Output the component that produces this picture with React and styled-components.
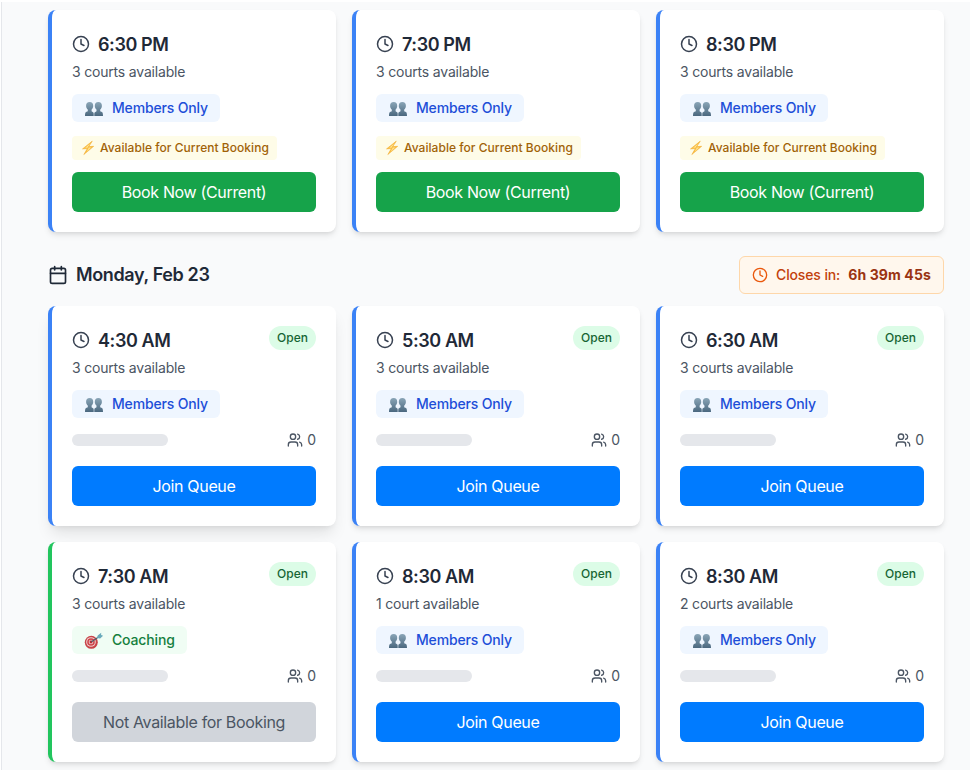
import React from "react";
import styled, { createGlobalStyle, css } from "styled-components";
import { Clock, Calendar, Users } from "lucide-react";

const GlobalStyle = createGlobalStyle`
  *, *::before, *::after { box-sizing: border-box; }
  body {
    margin: 0;
    background: #ffffff;
    font-family: Inter, "Liberation Sans", sans-serif;
    color: #1f2937;
    overflow: hidden;
  }
`;

const Page = styled.main`
  height: 768px;
  margin: 2px 0 0 1px;
  padding: 8px 25px 0 46px;
  border-left: 1px solid #e5e7eb;
  background: #f9fafb;
`;

const Grid = styled.div`
  display: grid;
  grid-template-columns: repeat(3, 288px);
  gap: 16px;
`;

const accents = { members: "#3b82f6", coaching: "#22c55e" };

const Card = styled.article`
  display: flex;
  flex-direction: column;
  align-items: flex-start;
  height: ${(p) => (p.$current ? 222 : 220)}px;
  padding: 20px;
  border-left: 4px solid ${(p) => accents[p.$kind]};
  border-radius: 8px;
  background: #ffffff;
  box-shadow: ${(p) =>
    p.$raised
      ? "0 10px 15px -3px rgba(0,0,0,.1), 0 4px 6px -4px rgba(0,0,0,.1)"
      : "0 4px 6px -1px rgba(0,0,0,.1), 0 2px 4px -2px rgba(0,0,0,.1)"};
`;

const CardHead = styled.header`
  display: flex;
  justify-content: space-between;
  align-items: flex-start;
  width: 100%;
  height: 28px;
`;

const Time = styled.h3`
  display: flex;
  align-items: center;
  gap: 8px;
  height: 28px;
  margin: 0;
  font-size: 18px;
  font-weight: 600;
  line-height: 28px;
  letter-spacing: -0.4px;
  white-space: nowrap;

  svg { flex: none; color: #374151; }
  span { padding-top: 1px; }
`;

const Status = styled.span`
  padding: 4px 8px;
  border-radius: 12px;
  background: #dcfce7;
  color: #166534;
  font-size: 12px;
  font-weight: 500;
  line-height: 16px;
`;

const Courts = styled.p`
  margin: 4px 0 12px;
  color: #4b5563;
  font-size: 14px;
  line-height: 20px;
  letter-spacing: -0.19px;
`;

const tagColors = {
  members: css`background: #eff6ff; color: #1d4ed8;`,
  coaching: css`background: #f0fdf4; color: #15803d;`,
};

const Tag = styled.div`
  display: flex;
  align-items: center;
  gap: 8px;
  height: 28px;
  padding: 0 12px;
  border-radius: 6px;
  font-size: 14px;
  font-weight: 500;
  line-height: 20px;
  letter-spacing: -0.16px;
  ${(p) => tagColors[p.$kind]}

  svg { flex: none; margin-top: 2px; }
`;

const CurrentNote = styled.div`
  display: flex;
  align-items: center;
  gap: 3px;
  height: 24px;
  margin: 14px 0 12px;
  padding: 0 8px;
  border-radius: 4px;
  background: #fefce8;
  color: #a16207;
  font-size: 12px;
  font-weight: 500;
  line-height: 16px;
  letter-spacing: 0.04px;
  white-space: nowrap;
`;

const QueueRow = styled.div`
  display: flex;
  align-items: center;
  justify-content: space-between;
  width: 100%;
  height: 20px;
  margin: 12px 0 16px;
`;

const Skeleton = styled.div`
  width: 96px;
  height: 12px;
  border-radius: 6px;
  background: #e5e7eb;
`;

const Count = styled.span`
  display: flex;
  align-items: center;
  gap: 4px;
  color: #4b5563;
  font-size: 14px;
  line-height: 20px;
`;

const buttonColors = {
  book: css`background: #16a34a; color: #ffffff;`,
  join: css`background: #007bff; color: #ffffff;`,
  disabled: css`background: #d1d5db; color: #4b5563;`,
};

const Button = styled.button`
  width: 100%;
  height: 40px;
  padding: 0;
  border: 0;
  border-radius: 6px;
  font: 400 16px/24px Inter, "Liberation Sans", sans-serif;
  letter-spacing: -0.34px;
  ${(p) => buttonColors[p.$variant]}
`;

const DayHeader = styled.div`
  display: flex;
  align-items: center;
  justify-content: space-between;
  width: 896px;
  height: 38px;
  margin: 24px 0 12px;
`;

const DayTitle = styled.h2`
  display: flex;
  align-items: center;
  gap: 8px;
  margin: 0;
  font-size: 18px;
  font-weight: 600;
  line-height: 28px;
  letter-spacing: -0.37px;
`;

const Deadline = styled.div`
  display: flex;
  align-items: center;
  gap: 8px;
  height: 38px;
  padding: 0 12px;
  border: 1px solid #fed7aa;
  border-radius: 6px;
  background: #fff7ed;
  color: #c2410c;
  font-size: 14px;
  font-weight: 500;
  line-height: 20px;
  letter-spacing: -0.13px;

  svg { color: #ea580c; }
`;

const Remaining = styled.strong`
  color: #9a3412;
  font-weight: 700;
  letter-spacing: 0.12px;
`;

const PeopleIcon = () => (
  <svg width="20" height="16" viewBox="0 0 20 16">
    <defs>
      <linearGradient id="bust" x1="0" y1="0" x2="0" y2="1">
        <stop offset="0" stopColor="#8aa5b7" />
        <stop offset="1" stopColor="#4b687f" />
      </linearGradient>
    </defs>
    <g fill="url(#bust)">
      <path d="M5.700 1C3.300 1 2 2.600 2.100 4.900c.1 1.600.7 2.800 1.700 3.600v1.700L2 11c-.7.400-1 1.500-1 4h8.700v-2.500c0-.8-.4-1.300-1-1.600l-1.100-.7V8.500C8.500 7.700 9.100 6.500 9.200 4.900 9.300 2.600 8 1 5.700 1z" />
      <path d="M14.300 1C12 1 10.700 2.600 10.800 4.900c.1 1.600.7 2.800 1.700 3.600v1.700l-1.200.7c-.6.300-1 .8-1 1.600V15H19c0-2.500-.3-3.600-1-4l-1.800-.8V8.500c1-.8 1.600-2 1.700-3.600C18 2.600 16.700 1 14.300 1z" />
    </g>
  </svg>
);

const TargetIcon = () => (
  <svg width="20" height="18" viewBox="0 0 20 18">
    <circle cx="7.300" cy="10.300" r="6.500" fill="#c84348" />
    <circle cx="7" cy="10" r="4.800" fill="#eed5d2" />
    <circle cx="7" cy="10" r="3.800" fill="#cf444a" />
    <circle cx="7" cy="10" r="2.300" fill="#edc8c6" />
    <circle cx="7" cy="10" r="1.400" fill="#b92b34" />
    <path d="M7.500 9.800L16 4" stroke="#4b5d68" strokeWidth="1.100" />
    <path d="M13 6l.7-2.600L17.200.8l-.1 2.300 2 .7-3 2.800z" fill="#69aabb" />
  </svg>
);

const BoltIcon = () => (
  <svg width="17" height="16" viewBox="0 0 17 16">
    <path d="M12.300 1.100L2.500 8.900l4.800-.3-3.500 6 9.900-8.300-4.900.3z" fill="#fbbf3c" stroke="#efa72d" strokeWidth=".5" />
    <path d="M10 3.800L5.200 7.700l3.700-.2-2.300 4 4.500-4-3.500.1z" fill="#ffe499" />
  </svg>
);

const kinds = {
  members: { label: "Members Only", Icon: PeopleIcon },
  coaching: { label: "Coaching", Icon: TargetIcon },
};

function Slot({ time, courts = 3, kind = "members", current, raised }) {
  const { label, Icon } = kinds[kind];
  const closed = kind === "coaching";
  return (
    <Card $kind={kind} $current={current} $raised={raised}>
      <CardHead>
        <Time><Clock size={18} /><span>{time}</span></Time>
        {!current && <Status>Open</Status>}
      </CardHead>
      <Courts>{courts} {courts === 1 ? "court" : "courts"} available</Courts>
      <Tag $kind={kind}><Icon /><span>{label}</span></Tag>
      {current ? (
        <CurrentNote><BoltIcon /><span>Available for Current Booking</span></CurrentNote>
      ) : (
        <QueueRow><Skeleton /><Count><Users size={16} /><span>0</span></Count></QueueRow>
      )}
      <Button $variant={current ? "book" : closed ? "disabled" : "join"} disabled={closed}>
        {current ? "Book Now (Current)" : closed ? "Not Available for Booking" : "Join Queue"}
      </Button>
    </Card>
  );
}

export default function App() {
  return (
    <>
      <GlobalStyle />
      <Page>
        <Grid>
          <Slot time="6:30 PM" current />
          <Slot time="7:30 PM" current />
          <Slot time="8:30 PM" current />
        </Grid>
        <DayHeader>
          <DayTitle><Calendar size={20} /><span>Monday, Feb 23</span></DayTitle>
          <Deadline><Clock size={16} /><span>Closes in:</span><Remaining>6h 39m 45s</Remaining></Deadline>
        </DayHeader>
        <Grid>
          <Slot time="4:30 AM" raised />
          <Slot time="5:30 AM" />
          <Slot time="6:30 AM" />
          <Slot time="7:30 AM" kind="coaching" />
          <Slot time="8:30 AM" courts={1} />
          <Slot time="8:30 AM" courts={2} />
        </Grid>
      </Page>
    </>
  );
}
